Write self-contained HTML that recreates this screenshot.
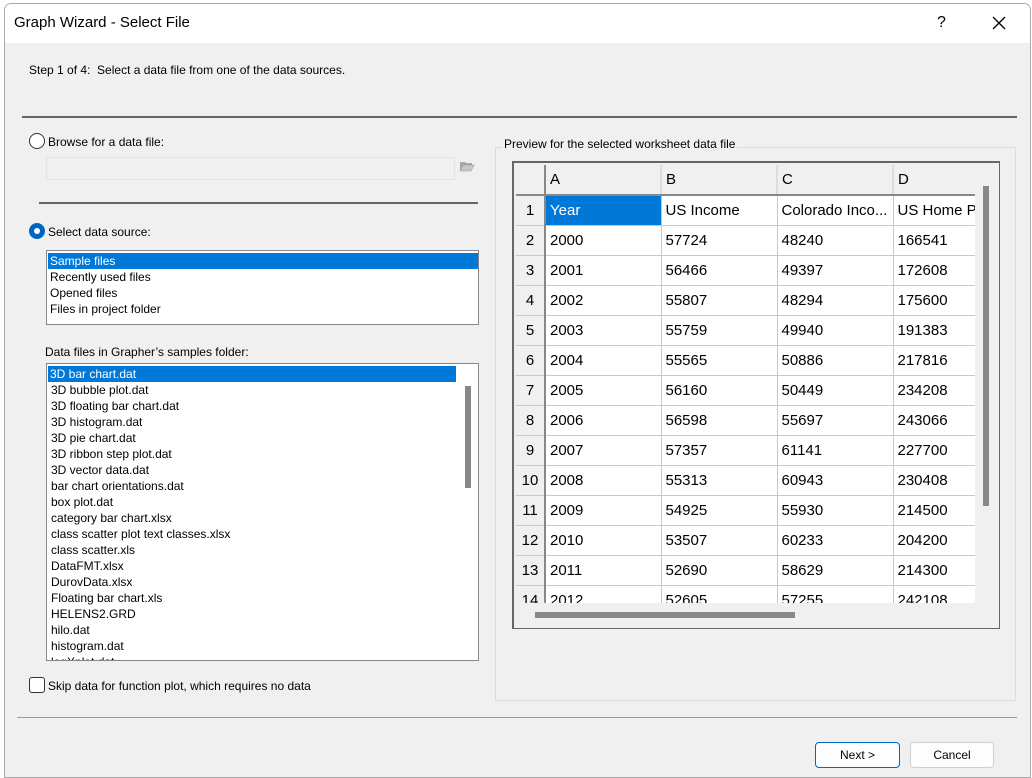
<!DOCTYPE html>
<html><head><style>
body{margin:0;width:1032px;height:778px;background:#fff;font-family:"Liberation Sans",sans-serif;overflow:hidden;position:relative}
.a{position:absolute}
.t{font-size:12px;color:#000;white-space:nowrap}
.win{left:4px;top:3px;width:1025px;height:773px;background:#f0f0f0;border:1px solid #aaa;border-radius:7px 7px 0 0;overflow:hidden}
.lst div{height:16px;line-height:16px;padding-left:3px;font-size:12px;white-space:nowrap}
.grid td{border-right:1px solid #c8c8c8;border-bottom:1px solid #c8c8c8;height:29px;padding:0 0 0 4px;font-size:15px;white-space:nowrap;overflow:hidden;background:#fff}
.grid td.h{background:#f0f0f0;text-align:center;padding:0;border-right:2px solid #888;font-size:15px}
.grid tr.hd td{background:#f0f0f0;border-bottom:2px solid #888;border-right:2px solid #ddd}
</style></head><body>
<div class="a win">
<div class="a" style="left:0;top:0;width:1025px;height:39px;background:#fff"></div>
<div class="a" style="left:9px;top:10px;font-size:15px">Graph Wizard - Select File</div>
<div class="a" style="left:932px;top:10px;font-size:16px">?</div>
<svg class="a" style="left:987px;top:12px" width="14" height="14"><path d="M1 1L13 13M13 1L1 13" stroke="#000" stroke-width="1.3"/></svg>
<div class="a t" style="left:24px;top:59px">Step 1 of 4:&nbsp; Select a data file from one of the data sources.</div>
<div class="a" style="left:17px;top:112px;width:995px;height:2px;background:#666"></div>
<div class="a" style="left:24px;top:129px;width:14px;height:14px;border:1px solid #333;border-radius:50%;background:#fff"></div>
<div class="a t" style="left:43px;top:131px">Browse for a data file:</div>
<div class="a" style="left:41px;top:153px;width:407px;height:21px;border:1px solid #e3e3e3;background:#f0f0f0"></div>
<svg class="a" style="left:454px;top:155px" width="16" height="14"><path d="M1 3h5l1 1h6v2H4L1 12z" fill="#aaa"/><path d="M1 12l3-6h11l-3 6z" fill="#c8c8c8" stroke="#999" stroke-width=".6"/></svg>
<div class="a" style="left:34px;top:198px;width:439px;height:2px;background:#666"></div>
<div class="a" style="left:24px;top:219px;width:16px;height:16px;border-radius:50%;background:#0067c0"></div>
<div class="a" style="left:29px;top:224px;width:6px;height:6px;border-radius:50%;background:#fff"></div>
<div class="a t" style="left:43px;top:221px">Select data source:</div>
<div class="a lst" style="left:41px;top:246px;width:430px;height:71px;border:1px solid #828790;background:#fff;padding:2px 0 0 1px">
<div style="background:#0078d7;color:#fff;padding-left:2px">Sample files</div><div style="padding-left:2px">Recently used files</div><div style="padding-left:2px">Opened files</div><div style="padding-left:2px">Files in project folder</div></div>
<div class="a t" style="left:40px;top:341px">Data files in Grapher’s samples folder:</div>
<div class="a lst" style="left:41px;top:359px;width:430px;height:294px;border:1px solid #828790;background:#fff;padding:2px 0 0 1px;overflow:hidden">
<div style="background:#0078d7;color:#fff;width:406px;padding-left:2px">3D bar chart.dat</div><div>3D bubble plot.dat</div><div>3D floating bar chart.dat</div><div>3D histogram.dat</div><div>3D pie chart.dat</div><div>3D ribbon step plot.dat</div><div>3D vector data.dat</div><div>bar chart orientations.dat</div><div>box plot.dat</div><div>category bar chart.xlsx</div><div>class scatter plot text classes.xlsx</div><div>class scatter.xls</div><div>DataFMT.xlsx</div><div>DurovData.xlsx</div><div>Floating bar chart.xls</div><div>HELENS2.GRD</div><div>hilo.dat</div><div>histogram.dat</div><div>logXplot.dat</div></div>
<div class="a" style="left:452px;top:360px;width:21px;height:294px;background:#fff"></div>
<div class="a" style="left:460px;top:382px;width:6px;height:102px;background:#888"></div>
<div class="a" style="left:24px;top:673px;width:14px;height:14px;border:1px solid #333;border-radius:3px;background:#fff"></div>
<div class="a t" style="left:43px;top:675px">Skip data for function plot, which requires no data</div>
<div class="a" style="left:490px;top:143px;width:519px;height:552px;border:1px solid #dcdcdc"></div>
<div class="a t" style="left:497px;top:133px;background:#f0f0f0;padding:0 2px">Preview for the selected worksheet data file</div>
<div class="a" style="left:507px;top:157px;width:485px;height:465px;border:1px solid #666;border-left:2px solid #666;border-top:2px solid #666;background:#f0f0f0"></div>
<div class="a" style="left:511px;top:161px;width:459px;height:438px;overflow:hidden">
<table class="grid" style="border-collapse:collapse;table-layout:fixed;width:460px">
<col style="width:29px"><col style="width:116px"><col style="width:116px"><col style="width:116px"><col style="width:83px">
<tr class="hd"><td class="h" style="border-right:2px solid #888"></td><td>A</td><td>B</td><td>C</td><td>D</td></tr>
<tr><td class="h">1</td><td style="background:#0078d7;color:#fff">Year</td><td>US Income</td><td>Colorado Inco...</td><td>US Home Pr</td></tr>
<tr><td class="h">2</td><td>2000</td><td>57724</td><td>48240</td><td>166541</td></tr>
<tr><td class="h">3</td><td>2001</td><td>56466</td><td>49397</td><td>172608</td></tr>
<tr><td class="h">4</td><td>2002</td><td>55807</td><td>48294</td><td>175600</td></tr>
<tr><td class="h">5</td><td>2003</td><td>55759</td><td>49940</td><td>191383</td></tr>
<tr><td class="h">6</td><td>2004</td><td>55565</td><td>50886</td><td>217816</td></tr>
<tr><td class="h">7</td><td>2005</td><td>56160</td><td>50449</td><td>234208</td></tr>
<tr><td class="h">8</td><td>2006</td><td>56598</td><td>55697</td><td>243066</td></tr>
<tr><td class="h">9</td><td>2007</td><td>57357</td><td>61141</td><td>227700</td></tr>
<tr><td class="h">10</td><td>2008</td><td>55313</td><td>60943</td><td>230408</td></tr>
<tr><td class="h">11</td><td>2009</td><td>54925</td><td>55930</td><td>214500</td></tr>
<tr><td class="h">12</td><td>2010</td><td>53507</td><td>60233</td><td>204200</td></tr>
<tr><td class="h">13</td><td>2011</td><td>52690</td><td>58629</td><td>214300</td></tr>
<tr><td class="h">14</td><td>2012</td><td>52605</td><td>57255</td><td>242108</td></tr>
</table></div>
<div class="a" style="left:978px;top:182px;width:6px;height:320px;background:#888"></div>
<div class="a" style="left:530px;top:608px;width:260px;height:6px;background:#888"></div>
<div class="a" style="left:12px;top:713px;width:1000px;height:1px;background:#999"></div>
<div class="a t" style="left:810px;top:738px;width:83px;height:24px;border:1px solid #0067c0;border-radius:4px;background:#fdfdfd;text-align:center;line-height:24px">Next &gt;</div>
<div class="a t" style="left:905px;top:738px;width:82px;height:24px;border:1px solid #d0d0d0;border-radius:4px;background:#fdfdfd;text-align:center;line-height:24px">Cancel</div>
</div>
</body></html>
